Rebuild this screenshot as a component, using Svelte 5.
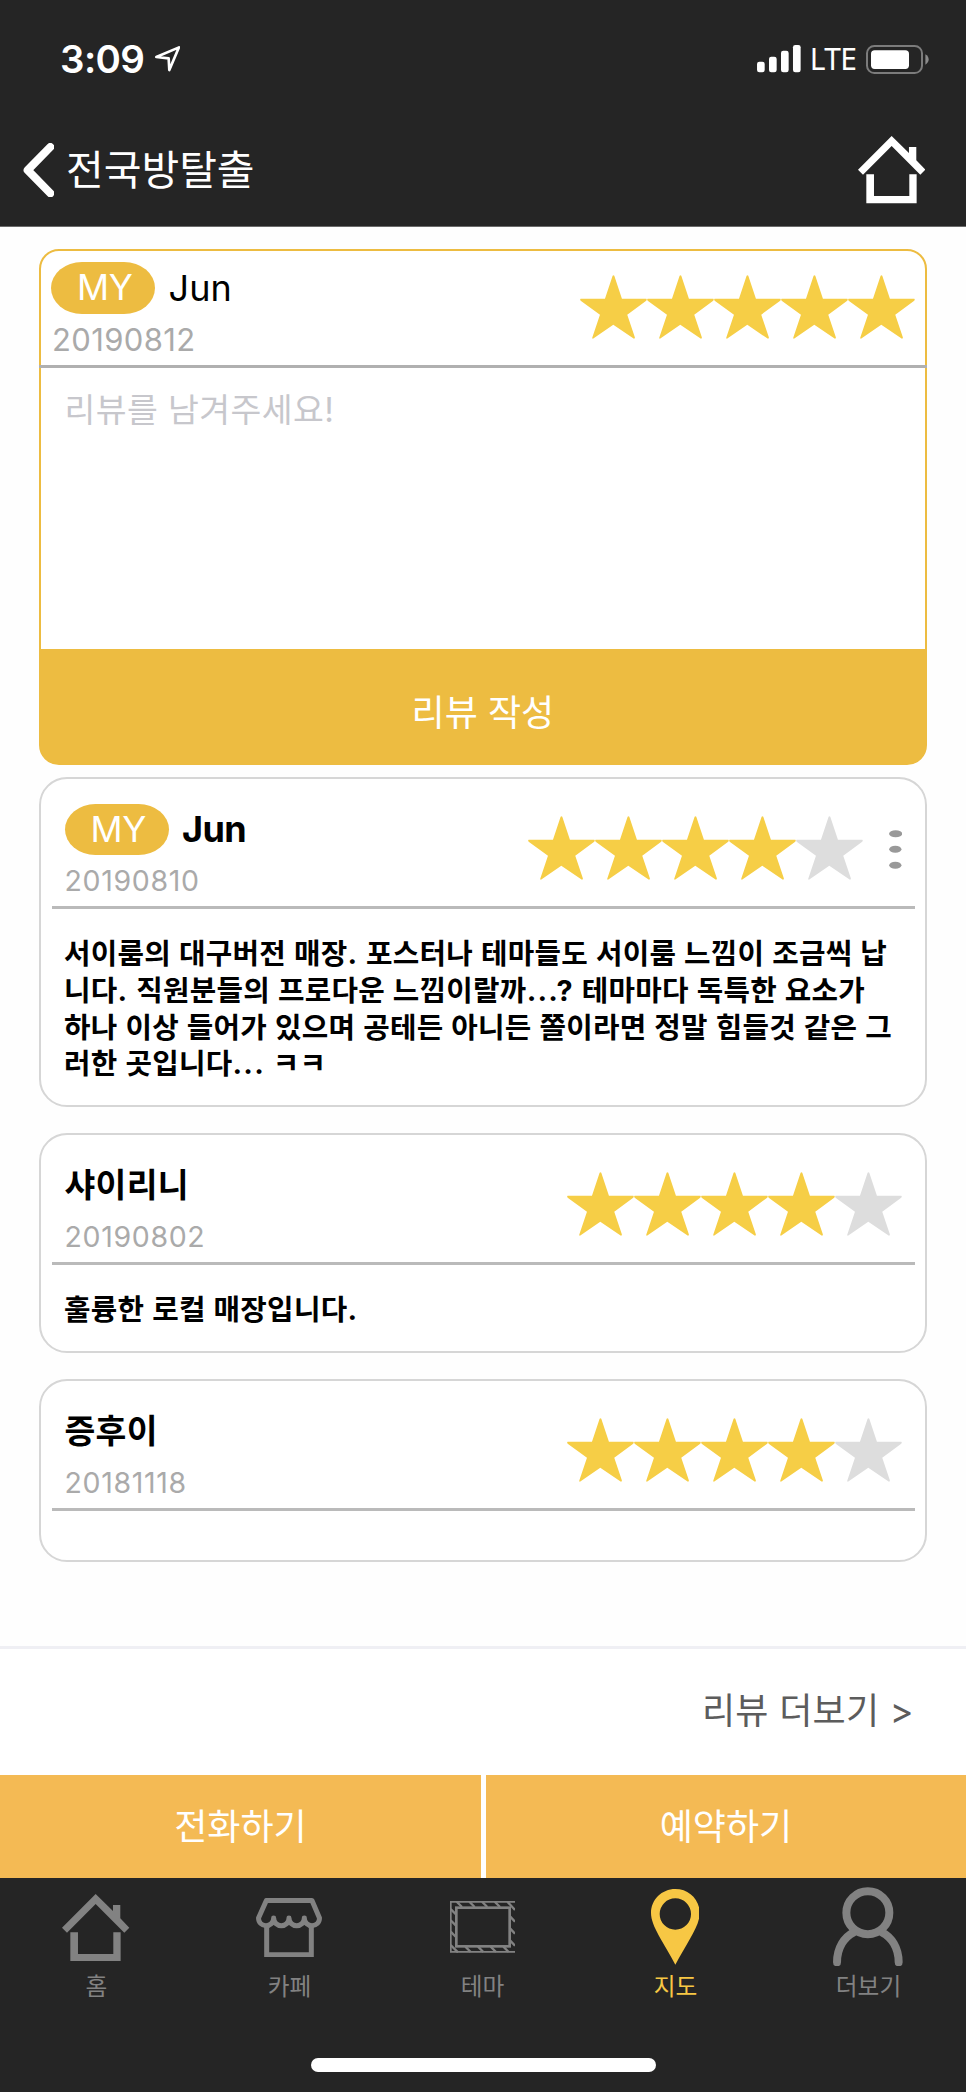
<script>
  const reviews = [
    {
      name: 'Jun', mine: true, date: '20190810', score: 4,
      lines: [
        '서이룸의 대구버전 매장. 포스터나 테마들도 서이룸 느낌이 조금씩 납',
        '니다. 직원분들의 프로다운 느낌이랄까...? 테마마다 독특한 요소가',
        '하나 이상 들어가 있으며 공테든 아니든 쫄이라면 정말 힘들것 같은 그',
        '러한 곳입니다... ㅋㅋ'
      ]
    },
    { name: '샤이리니', mine: false, date: '20190802', score: 4, lines: ['훌륭한 로컬 매장입니다.'] },
    { name: '증후이', mine: false, date: '20181118', score: 4, lines: [] }
  ];
  const tabs = [
    { id: 'home', label: '홈' },
    { id: 'cafe', label: '카페' },
    { id: 'theme', label: '테마' },
    { id: 'map', label: '지도' },
    { id: 'more', label: '더보기' }
  ];
  const active = 'map';
  // Punctuation runs are set a little wider than the syllables.
  const pieces = (line) => line.split(/([.?]+)/);
</script>

{#snippet house()}
  <svg class="house" viewBox="0 0 202 202" fill="currentColor">
    <path d="M101 0 L153 51 V33 H175 V73 L202 101 L187 116 L101 30 L15 116 L0 101 Z" />
    <path d="M25 115 H48 V180 H154 V115 H176 V202 H25 Z" />
  </svg>
{/snippet}

{#snippet stars(score)}
  <div class="stars">
    {#each [1, 2, 3, 4, 5] as n}
      <svg viewBox="0 0 201 192" class:off={n > score}>
        <path d="M98 2 Q101 -1 103 2 L126 71 H199 Q202 73 199 77 L142 119 L165 188 Q165 192 161 191 L100 149 L40 191 Q36 192 37 188 L60 119 L2 77 Q-1 73 2 71 H75 Z" />
      </svg>
    {/each}
  </div>
{/snippet}

<div class="screen">
  <header>
    <div class="status">
      <span class="time">3:09</span>
      <svg class="arrow" viewBox="0 0 76 77" fill="none" stroke="#fff" stroke-width="8" stroke-linejoin="round">
        <path d="M4 33 L72 4 L43 72 L41 37 Z" />
      </svg>
      <svg class="signal" viewBox="0 0 132 82" fill="#fff">
        <rect x="0" y="50" width="23" height="32" rx="7" />
        <rect x="36" y="35" width="23" height="47" rx="7" />
        <rect x="72" y="17" width="23" height="65" rx="7" />
        <rect x="108" y="0" width="23" height="82" rx="7" />
      </svg>
      <span class="lte">LTE</span>
      <svg class="battery" viewBox="0 0 188 87">
        <rect x="3" y="3" width="165" height="81" rx="22" fill="none" stroke="#7c7c7c" stroke-width="6" />
        <rect x="15" y="16" width="114" height="56" rx="11" fill="#fff" />
        <path d="M178 28 Q188 34 188 43.500 Q188 53 178 59 Z" fill="#8b8b8b" />
      </svg>
    </div>
    <div class="nav">
      <svg class="back" viewBox="0 0 94 163" fill="none" stroke="#fff" stroke-width="24" stroke-linecap="round" stroke-linejoin="round">
        <path d="M82 12 L14 81.500 L82 151" />
      </svg>
      <h1>전국방탈출</h1>
      {@render house()}
    </div>
  </header>

  <main>
    <section class="compose">
      <div class="head">
        <div class="who">
          <div class="name"><span class="badge">MY</span><span>Jun</span></div>
          <div class="date">20190812</div>
        </div>
        {@render stars(5)}
      </div>
      <div class="rule"></div>
      <div class="placeholder">리뷰를 남겨주세요!</div>
      <div class="submit">리뷰 작성</div>
    </section>

    {#each reviews as r}
      <article>
        <div class="head">
          <div class="who">
            <div class="name" class:ko={!r.mine}>
              {#if r.mine}<span class="badge">MY</span>{/if}
              <b>{r.name}</b>
            </div>
            <div class="date">{r.date}</div>
          </div>
          {@render stars(r.score)}
          {#if r.mine}
            <svg class="dots" viewBox="0 0 40 118" fill="#999">
              <ellipse cx="20" cy="11" rx="20" ry="10.500" />
              <ellipse cx="19" cy="58" rx="18.500" ry="10.500" />
              <ellipse cx="19" cy="106" rx="18.500" ry="10.500" />
            </svg>
          {/if}
        </div>
        <div class="rule"></div>
        <div class="body">
          {#each r.lines as line}
            <div>{#each pieces(line) as p, i}<span class:punct={i % 2 === 1}>{p}</span>{/each}</div>
          {/each}
        </div>
      </article>
    {/each}
  </main>

  <div class="more">리뷰 더보기 &gt;</div>

  <div class="actions">
    <div>전화하기</div>
    <div>예약하기</div>
  </div>

  <footer>
    <nav>
      {#each tabs as t}
        <div class="tab" class:active={t.id === active}>
          <div class="icon">
            {#if t.id === 'home'}
              {@render house()}
            {:else if t.id === 'cafe'}
              <svg class="cafe" viewBox="0 0 198 178" fill="none" stroke="currentColor" stroke-width="15">
                <path stroke-linejoin="round" d="M7.500 60 L31 7.500 H168 L190.500 60 C190.500 74 180 83 168 83 C156 83 145 74 145 60 C145 74 134 83 122 83 C110 83 99 74 99 60 C99 74 88 83 76 83 C64 83 53 74 53 60 C53 74 42 83 30 83 C18 83 7.500 74 7.500 60 Z" />
                <path d="M32 84 V170.500 H166 V84" />
              </svg>
            {:else if t.id === 'theme'}
              <svg class="theme" viewBox="0 0 195 155" fill="none" stroke="currentColor">
                <path stroke-width="5" d="M195 2.500 H2.500 V152.500 H195" />
                <rect x="19" y="20" width="160" height="116" stroke-width="8" />
                <path stroke-width="7" d="M20 2 L36 18 M58 2 L74 18 M96 2 L112 18 M134 2 L150 18 M172 2 L195 27 M2 24 L18 40 M2 58 L18 74 M2 92 L18 108 M2 132 L24 154 M46 137 L62 153 M84 137 L100 153 M122 137 L138 153 M160 137 L176 153 M180 46 L195 62 M180 82 L195 98 M180 118 L195 134" />
              </svg>
            {:else if t.id === 'map'}
              <svg class="pin" viewBox="0 0 146 227" fill="currentColor">
                <path fill-rule="evenodd" d="M73 0 C114 0 146 32 146 72 C146 112 108 160 73 227 C38 160 0 112 0 72 C0 32 32 0 73 0 Z M73 28 A47 47 0 1 0 73 122 A47 47 0 1 0 73 28 Z" />
              </svg>
            {:else}
              <svg class="person" viewBox="0 0 209 238" fill="none" stroke="currentColor" stroke-width="24" stroke-linecap="round">
                <circle cx="104.500" cy="77" r="64.500" />
                <path d="M12 226 C12 182 34 150 62 136 M197 226 C197 182 175 150 147 136" />
              </svg>
            {/if}
          </div>
          <span>{t.label}</span>
        </div>
      {/each}
    </nav>
    <div class="indicator"></div>
  </footer>
</div>

<style>
  :global(body) { margin: 0; background: #fff; }
  * { box-sizing: border-box; }
  svg { display: block; flex: none; }
  .screen {
    width: 966px; height: 2092px; display: flex; flex-direction: column;
    background: #fefefe; color: #000; overflow: hidden; white-space: nowrap;
    font-family: Inter, "Noto Sans CJK KR", sans-serif;
  }
  header { height: 227px; background: #252525; color: #fff; border-bottom: 1px solid #6a6a6a; }
  .status { height: 118px; display: flex; align-items: center; padding: 0 37.500px 0 60px; }
  .time { font-size: 38.500px; font-weight: 600; width: 95px; letter-spacing: -0.600px; }
  .arrow { width: 25.300px; height: 25.700px; }
  .signal { width: 44px; height: 27.300px; margin-left: auto; }
  .lte { font: 30px/40px "Noto Sans", sans-serif; width: 56px; padding-left: 8.500px; letter-spacing: -0.700px; }
  .battery { width: 62.700px; height: 29px; margin-left: 8.500px; }
  .nav { height: 104px; display: flex; align-items: center; padding: 0 41px 0 22.700px; }
  .back { width: 31.300px; height: 54.300px; }
  h1 { margin: 0 0 0 12px; font-size: 41px; font-weight: 400; line-height: 60px; }
  .house { width: 67.300px; height: 67.300px; }
  .nav .house { margin-left: auto; }

  main { height: 1419px; padding: 22px 38.800px 0 38.600px; display: flex; flex-direction: column; }
  .compose {
    height: 516px; border: 2.600px solid #edbc41; border-radius: 20px;
    display: flex; flex-direction: column; margin-bottom: 12px; background: #fff; flex: none;
  }
  .head { display: flex; align-items: flex-start; justify-content: space-between; }
  .compose .head { height: 114px; padding: 11px 10.500px 0 10.500px; }
  .name { height: 51.500px; display: flex; align-items: center; font-size: 36px; gap: 13.500px; }
  .badge {
    width: 104px; height: 51.500px; border-radius: 31px / 26px; background: #edbc41; color: #fff;
    font-weight: 400; line-height: 52px; padding-left: 26px; font-size: 35.500px; letter-spacing: -0.500px;
  }
  .date { font-size: 31px; line-height: 51.500px; color: #aaa; }
  .compose .date { padding-left: 1px; letter-spacing: 0.350px; }
  .stars { display: flex; margin: 12.500px 0 0 auto; }
  .stars svg { width: 66.900px; height: 64px; fill: #f6ce46; }
  .stars svg.off { fill: #ddd; }
  .rule { height: 3px; background: #bababa; flex: none; }
  .compose .rule { margin: 0 -2px; background: #b0b0b0; }
  .placeholder { flex: 1; padding: 21px 0 0 24px; font-size: 33.500px; line-height: 42px; color: #c7c7cc; letter-spacing: 0.400px; }
  .submit {
    height: 115px; margin: 0 -1px -1px; border-radius: 0 0 18px 18px; background: #edbc41; color: #fff;
    font-size: 36px; line-height: 128px; text-align: center;
  }
  article {
    border: 2.600px solid #d6d6d6; border-radius: 28px; margin-bottom: 26px; background: #fff; flex: none;
  }
  article .head { height: 127px; padding: 24.500px 23.300px 0 24px; }
  article .rule { margin: 0 10.500px 0 11px; }
  article .date { font-size: 28.500px; letter-spacing: 0.650px; font-kerning: none; }
  .dots { width: 13.300px; height: 39.300px; margin: 26px 0 0 26px; }
  article b { font-weight: 700; letter-spacing: -0.600px; }
  .name.ko { padding-bottom: 5px; }
  .ko b { font-size: 33.500px; letter-spacing: 0.200px; }
  .body {
    min-height: 49px; padding: 27px 0 22px 23.500px; font-size: 28.800px; font-weight: 700; line-height: 36.800px;
    letter-spacing: 0.260px; word-spacing: 0.800px;
  }
  .punct { letter-spacing: 1.200px; }

  .more {
    height: 129px; border-top: 3px solid #efeff4; padding-right: 52px; text-align: right;
    font-size: 36px; line-height: 124px; color: #5c5c5c; background: #fff; flex: none; letter-spacing: 0.300px;
  }
  .actions { display: grid; grid-template-columns: 481px 480px; gap: 5px; height: 103px; flex: none; background: #fff; }
  .actions div { background: #f4ba54; color: #fff; font-size: 36px; line-height: 104px; text-align: center; }

  footer { height: 214px; background: #252525; flex: none; }
  nav { display: grid; grid-template-columns: repeat(5, 1fr); height: 180px; padding-right: 1px; }
  .tab { display: flex; flex-direction: column; align-items: center; color: #828282; font-size: 23.700px; line-height: 34px; }
  .tab.active { color: #f7c744; }
  .icon { height: 92px; display: flex; align-items: center; padding: 6.500px 0.800px 0 0; }
  .cafe { width: 66px; height: 59.300px; }
  .theme { width: 65px; height: 51.700px; }
  .pin { width: 48.700px; height: 75.700px; }
  .person { width: 69.700px; height: 79.300px; margin-top: -1px; }
  .indicator { width: 345px; height: 13.500px; border-radius: 7px; background: #fff; margin: 0 auto; }
</style>
